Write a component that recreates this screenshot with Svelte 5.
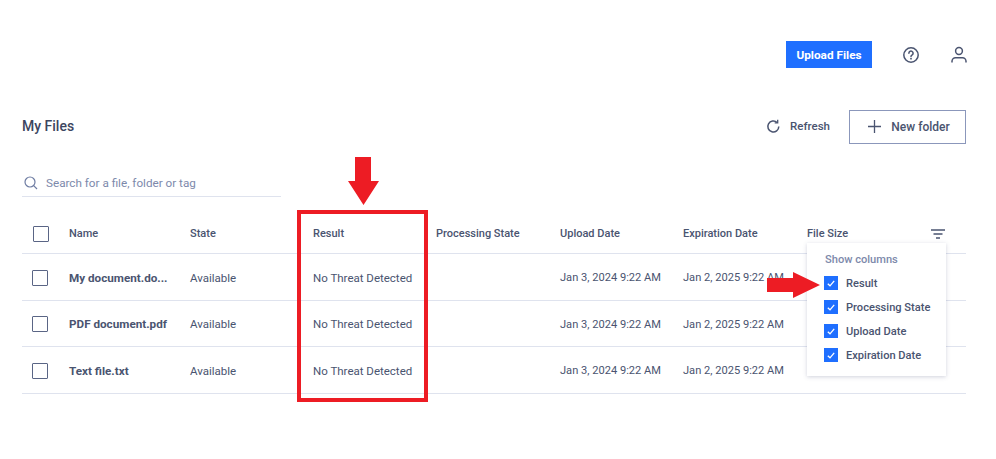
<script>
  const rows = [
    { name: 'My document.do...' },
    { name: 'PDF document.pdf' },
    { name: 'Text file.txt' }
  ];
  const cols = ['Result', 'Processing State', 'Upload Date', 'Expiration Date'];
</script>

<div class="page">
  <header class="top">
    <button class="upload">Upload Files</button>
    <svg class="help" width="18" height="18" viewBox="0 0 18 18" fill="none" stroke="#4a5470" stroke-width="1.5"><circle cx="9" cy="9" r="7.2"/><path d="M6.9 7.2a2.1 2.1 0 1 1 3.3 1.7c-.8.5-1.2.9-1.2 1.7" stroke-linecap="round"/><circle cx="9" cy="12.7" r=".9" fill="#4a5470" stroke="none"/></svg>
    <svg class="user" width="18" height="18" viewBox="0 0 18 18" fill="none" stroke="#4a5470" stroke-width="1.5"><circle cx="9" cy="5" r="3.4"/><path d="M2 16.5v-1.2c0-2 1.6-3.5 3.5-3.5h7c1.900 0 3.500 1.500 3.500 3.500v1.200"/></svg>
  </header>

  <section class="titlebar">
    <h1>My Files</h1>
    <div class="actions">
      <button class="refresh">
        <svg width="15" height="15" viewBox="0 0 15 15" fill="none" stroke="#4a5470" stroke-width="1.500"><path d="M12.800 7.500a5.500 5.500 0 1 1-1.700-4"/><path d="M11.700 .8v3h-3" stroke-width="1.300"/></svg>
        Refresh
      </button>
      <button class="newfolder">
        <svg width="13" height="13" viewBox="0 0 13 13" stroke="#4a5470" stroke-width="1.300"><path d="M6.500 0v13M0 6.500h13"/></svg>
        New folder
      </button>
    </div>
  </section>

  <div class="search">
    <svg width="14" height="14" viewBox="0 0 14 14" fill="none" stroke="#6f7da3" stroke-width="1.200"><circle cx="6" cy="6" r="5"/><path d="M9.700 9.700l3.300 3.300"/></svg>
    <span>Search for a file, folder or tag</span>
  </div>

  <div class="table">
    <div class="row head">
      <div class="cell"><span class="box"></span></div>
      <div class="cell">Name</div>
      <div class="cell">State</div>
      <div class="cell">Result</div>
      <div class="cell">Processing State</div>
      <div class="cell">Upload Date</div>
      <div class="cell">Expiration Date</div>
      <div class="cell last">
        File Size
        <svg width="14" height="10" viewBox="0 0 14 10" stroke="#4a5470" stroke-width="1.400"><path d="M0 1h14M2.500 5h9M5 9h4"/></svg>
      </div>
    </div>
    {#each rows as row}
      <div class="row">
        <div class="cell"><span class="box rowbox"></span></div>
        <div class="cell name">{row.name}</div>
        <div class="cell wide">Available</div>
        <div class="cell wide">No Threat Detected</div>
        <div class="cell"></div>
        <div class="cell">Jan 3, 2024 9:22 AM</div>
        <div class="cell">Jan 2, 2025 9:22 AM</div>
        <div class="cell"></div>
      </div>
    {/each}
  </div>

  <div class="menu">
    <div class="menutitle">Show columns</div>
    {#each cols as c}
      <div class="opt">
        <span class="check">
          <svg width="8" height="7" viewBox="0 0 8 7" fill="none" stroke="#fff" stroke-width="1.300"><path d="M.8 3.800l2.200 2 4.200-5"/></svg>
        </span>
        {c}
      </div>
    {/each}
  </div>

  <div class="redbox"></div>
  <svg class="arrow-down" width="32" height="48" viewBox="0 0 32 48"><path d="M7 0h16v24h8L15.500 48 0 24h7z" fill="#ed1c24"/></svg>
  <svg class="arrow-right" width="54" height="26" viewBox="0 0 54 26"><path d="M0 6h26V0l27 13-27 13v-6H0z" fill="#ed1c24"/></svg>
</div>

<style>
  :global(body) {
    margin: 0;
    background: #fff;
  }
  .page {
    position: relative;
    width: 996px;
    height: 459px;
    overflow: hidden;
    box-sizing: border-box;
    padding: 41px 30px 0 22px;
    font-family: Roboto, "Liberation Sans", sans-serif;
    font-size: 11.100px;
    color: #4a5470;
  }
  button {
    font: inherit;
    border: none;
    background: none;
    padding: 0;
  }
  .top {
    display: flex;
    align-items: center;
    justify-content: flex-end;
    height: 27px;
    margin-right: -2px;
  }
  .upload {
    width: 86px;
    height: 27px;
    background: #1f6fff;
    color: #fff;
    font-size: 11.800px;
    font-weight: 700;
  }
  .help {
    margin-left: 30px;
  }
  .user {
    margin-left: 30px;
  }
  .titlebar {
    display: flex;
    align-items: center;
    justify-content: space-between;
    margin-top: 42px;
    height: 34px;
  }
  h1 {
    margin: 0 0 3px;
    font-size: 14px;
    font-weight: 500;
    color: #3c4560;
  }
  .actions {
    display: flex;
    align-items: center;
    gap: 19px;
  }
  .refresh {
    display: flex;
    align-items: center;
    gap: 9px;
    margin-bottom: 2px;
    color: #4a5470;
    font-size: 11.500px;
    font-weight: 500;
  }
  .newfolder {
    display: flex;
    align-items: center;
    justify-content: center;
    gap: 10px;
    width: 117px;
    height: 34px;
    box-sizing: border-box;
    padding: 0 0 1px 3px;
    border: 1px solid #8b97bb;
    color: #4a5470;
    font-size: 12px;
    font-weight: 500;
  }
  .search {
    display: flex;
    align-items: center;
    gap: 8px;
    width: 259px;
    height: 29px;
    box-sizing: border-box;
    margin-top: 24px;
    padding: 2px 0 0 2px;
    border-bottom: 1px solid #dfe3ee;
    color: #7d89ab;
    font-size: 11.700px;
  }
  .table {
    margin-top: 15px;
  }
  .row {
    display: grid;
    grid-template-columns: 47px 121px 123px 123px 124px 123px 124px 159px;
    align-items: center;
    height: 46.500px;
    border-bottom: 1px solid #dfe3ee;
    box-sizing: border-box;
    padding-top: 2px;
  }
  .head {
    height: 42px;
    font-size: 11px;
    font-weight: 500;
  }
  .cell {
    white-space: nowrap;
  }
  .cell.wide {
    font-size: 11.500px;
  }
  .cell.last {
    display: flex;
    align-items: center;
    justify-content: space-between;
    padding-right: 21px;
  }
  .name {
    font-size: 11.700px;
    font-weight: 700;
  }
  .box {
    display: block;
    width: 14px;
    height: 14px;
    margin-left: 11px;
    border: 1px solid #5a6585;
    border-radius: 1px;
  }
  .rowbox {
    margin-left: 10px;
  }
  .menu {
    position: absolute;
    left: 807px;
    top: 243px;
    width: 139px;
    height: 133px;
    box-sizing: border-box;
    padding: 10px 0 0 18px;
    background: #fff;
    box-shadow: 0 1px 4px rgba(70, 80, 120, 0.25);
  }
  .menutitle {
    height: 18px;
    line-height: 14px;
    color: #7d89ab;
    font-weight: 500;
  }
  .opt {
    display: flex;
    align-items: center;
    gap: 7px;
    height: 24px;
    font-weight: 500;
  }
  .check {
    display: flex;
    align-items: center;
    justify-content: center;
    width: 14px;
    height: 14px;
    margin-left: -1px;
    margin-right: 1px;
    background: #1f6fff;
  }
  .redbox {
    position: absolute;
    left: 297px;
    top: 210px;
    width: 131px;
    height: 192px;
    box-sizing: border-box;
    border: 4px solid #ed1c24;
  }
  .arrow-down {
    position: absolute;
    left: 348px;
    top: 157px;
  }
  .arrow-right {
    position: absolute;
    left: 767px;
    top: 272px;
  }
</style>
